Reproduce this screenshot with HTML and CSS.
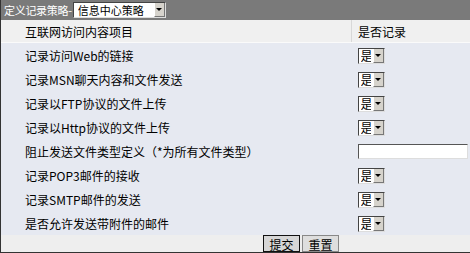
FILE: index.html
```html
<!DOCTYPE html>
<html lang="zh-CN">
<head>
  <meta charset="UTF-8" />
  <title>定义记录策略</title>
  <link rel="stylesheet" href="styles.css">
</head>
<body>

<div class="panel">

  <!-- 标题栏 -->
  <div class="titlebar">
    <span class="title">定义记录策略-</span>
    <span class="combo combo-wide">
      <select><option>信息中心策略</option></select>
      <span class="arrow"></span>
    </span>
  </div>

  <table class="rules">
    <tr class="head">
      <td class="item">互联网访问内容项目</td>
      <td class="opt">是否记录</td>
    </tr>
    <tr>
      <td class="item">记录访问Web的链接</td>
      <td class="opt"><span class="combo"><select><option>是</option><option>否</option></select><span class="arrow"></span></span></td>
    </tr>
    <tr>
      <td class="item">记录MSN聊天内容和文件发送</td>
      <td class="opt"><span class="combo"><select><option>是</option><option>否</option></select><span class="arrow"></span></span></td>
    </tr>
    <tr>
      <td class="item">记录以FTP协议的文件上传</td>
      <td class="opt"><span class="combo"><select><option>是</option><option>否</option></select><span class="arrow"></span></span></td>
    </tr>
    <tr>
      <td class="item">记录以Http协议的文件上传</td>
      <td class="opt"><span class="combo"><select><option>是</option><option>否</option></select><span class="arrow"></span></span></td>
    </tr>
    <tr>
      <td class="item">阻止发送文件类型定义（*为所有文件类型）</td>
      <td class="opt"><input type="text" class="types" /></td>
    </tr>
    <tr>
      <td class="item">记录POP3邮件的接收</td>
      <td class="opt"><span class="combo"><select><option>是</option><option>否</option></select><span class="arrow"></span></span></td>
    </tr>
    <tr>
      <td class="item">记录SMTP邮件的发送</td>
      <td class="opt"><span class="combo"><select><option>是</option><option>否</option></select><span class="arrow"></span></span></td>
    </tr>
    <tr>
      <td class="item">是否允许发送带附件的邮件</td>
      <td class="opt"><span class="combo"><select><option>是</option><option>否</option></select><span class="arrow"></span></span></td>
    </tr>
  </table>

  <div class="actions">
    <button class="active">提交</button>
    <button>重置</button>
  </div>

</div>

</body>
</html>
```

FILE: styles.css
```css
body {
  margin: 0;
  font-family: "Noto Sans CJK SC", "Liberation Sans", sans-serif;
  font-size: 12px;
  color: #000;
  background: #fff;
}
.panel {
  width: 470px;
  height: 253px;
  box-sizing: border-box;
  border-left: 1px solid #333;
  border-bottom: 1px solid #333;
  background: #eeeeee;
  display: flex;
  flex-direction: column;
}
.titlebar {
  height: 21px;
  background: #7a7a7a;
  display: flex;
  align-items: center;
  padding-left: 3px;
}
.title {
  color: #fff;
  font-size: 11px;
  letter-spacing: -0.3px;
  margin-right: 1px;
}
.combo {
  display: inline-flex;
  align-items: stretch;
  height: 16px;
  box-sizing: border-box;
  border: 1px solid #444;
  border-right-color: #ddd;
  border-bottom-color: #ddd;
  background: #fff;
  vertical-align: middle;
}
.combo select {
  appearance: none;
  -webkit-appearance: none;
  border: none;
  background: transparent;
  font: inherit;
  font-size: 12px;
  line-height: 14px;
  padding: 0 2px;
  margin: 0;
  width: 14px;
  height: 14px;
  outline: none;
}
.combo-wide select {
  width: 80px;
  font-size: 11px;
  padding-left: 4px;
}
.arrow {
  width: 11px;
  background: #d6d3cc;
  border-left: 1px solid #fff;
  border-right: 1px solid #777;
  border-bottom: 1px solid #777;
  box-sizing: border-box;
  display: flex;
  align-items: center;
  justify-content: center;
}
.arrow::after {
  content: "";
  border-left: 3px solid transparent;
  border-right: 3px solid transparent;
  border-top: 3px solid #000;
}
.rules {
  width: 100%;
  border-collapse: collapse;
  background: #e6e9f1;
}
.rules td {
  height: 24px;
  padding: 0;
  vertical-align: middle;
}
.rules .item {
  width: 326px;
  padding-left: 24px;
}
.rules .opt {
  padding-left: 6px;
}
.rules .head {
  background: #f0f0f0;
}
.rules .head td {
  height: 22px;
  border-bottom: 1px solid #fafafa;
}
.rules .head .item {
  border-right: 1px solid #d8d8d8;
}
.types {
  width: 110px;
  height: 15px;
  box-sizing: border-box;
  border: 1px solid #555;
  border-right-color: #ddd;
  border-bottom-color: #ddd;
  padding: 0;
  margin: 0;
  display: block;
}
.actions {
  flex: 1;
  display: flex;
  align-items: center;
  padding-left: 262px;
  gap: 2px;
}
.actions button {
  font: inherit;
  font-size: 12px;
  height: 17px;
  width: 37px;
  padding: 0;
  background: #dedede;
  border: 1px solid #888;
  color: #000;
}
.actions button.active {
  border-color: #111;
  background: #d6d6d6;
}
```
